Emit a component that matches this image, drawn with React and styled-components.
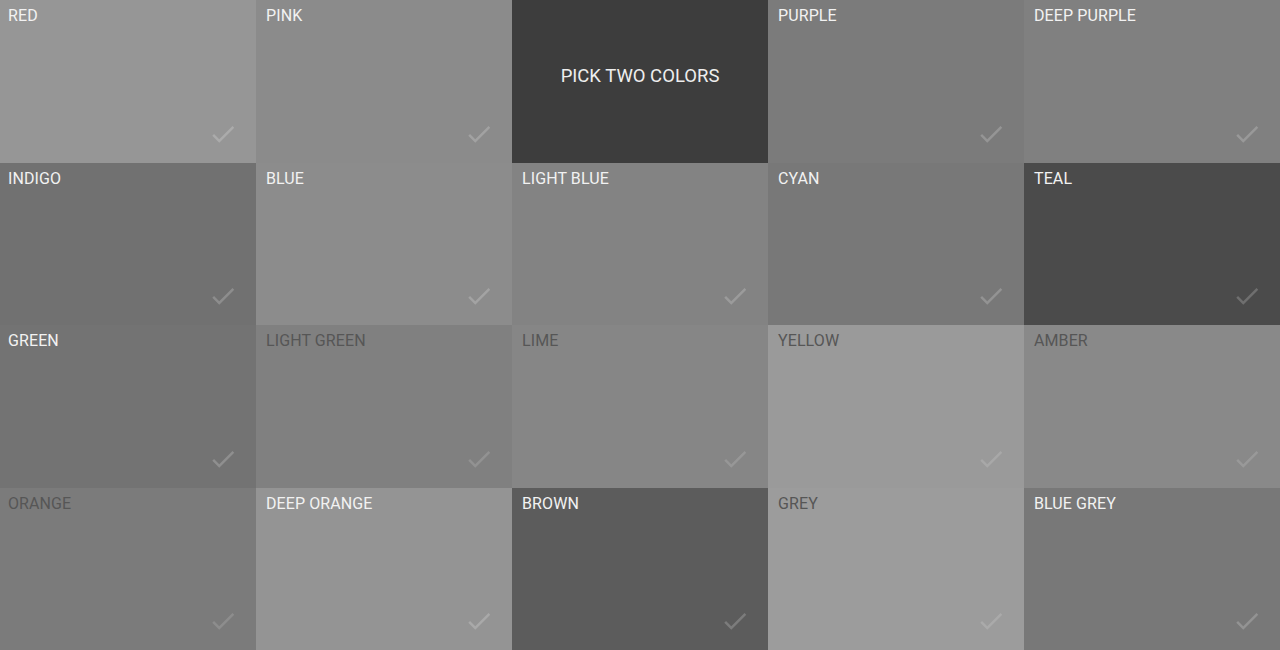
import styled, { createGlobalStyle } from 'styled-components';

const GlobalStyle = createGlobalStyle`
  html, body {
    margin: 0;
    padding: 0;
    height: 100%;
    overflow: hidden;
  }
  #root {
    height: 100%;
  }
`;

const Grid = styled.div`
  display: grid;
  grid-template-columns: repeat(5, 1fr);
  grid-template-rows: repeat(4, 1fr);
  width: 100vw;
  height: 100vh;
  font-family: Roboto, "Liberation Sans", sans-serif;
`;

const Tile = styled.div`
  position: relative;
  background: ${(p) => p.$bg};
  color: ${(p) => (p.$dark ? '#565656' : '#f2f2f2')};
  padding: 6px 10px;
  box-sizing: border-box;

  &:nth-child(5n + 1) {
    padding-left: 8px;
  }
`;

const Label = styled.div`
  font-size: 16px;
  line-height: 20px;
  letter-spacing: 0.1px;
`;

const Prompt = styled.div`
  display: flex;
  align-items: center;
  justify-content: center;
  background: #3d3d3d;
  color: #eeeeee;
  font-size: 18.5px;
  padding-bottom: 10px;
`;

const Check = styled.svg`
  position: absolute;
  right: 18px;
  bottom: 14px;
  width: 30px;
  height: 30px;
  fill: ${(p) => (p.$dark ? 'rgba(255,255,255,0.14)' : 'rgba(255,255,255,0.2)')};
`;

const colors = [
  { name: 'RED', bg: '#969696' },
  { name: 'PINK', bg: '#8b8b8b' },
  null,
  { name: 'PURPLE', bg: '#7b7b7b' },
  { name: 'DEEP PURPLE', bg: '#808080' },
  { name: 'INDIGO', bg: '#717171' },
  { name: 'BLUE', bg: '#8c8c8c' },
  { name: 'LIGHT BLUE', bg: '#838383' },
  { name: 'CYAN', bg: '#787878' },
  { name: 'TEAL', bg: '#4b4b4b' },
  { name: 'GREEN', bg: '#737373' },
  { name: 'LIGHT GREEN', bg: '#808080', dark: true },
  { name: 'LIME', bg: '#868686', dark: true },
  { name: 'YELLOW', bg: '#9a9a9a', dark: true },
  { name: 'AMBER', bg: '#898989', dark: true },
  { name: 'ORANGE', bg: '#7b7b7b', dark: true },
  { name: 'DEEP ORANGE', bg: '#949494' },
  { name: 'BROWN', bg: '#5c5c5c' },
  { name: 'GREY', bg: '#9c9c9c', dark: true },
  { name: 'BLUE GREY', bg: '#787878' },
];

function CheckIcon({ dark }) {
  return (
    <Check viewBox="0 0 24 24" $dark={dark}>
      <path d="M9 16.17L4.83 12l-1.42 1.41L9 19 21 7l-1.41-1.41z" />
    </Check>
  );
}

export default function App() {
  return (
    <>
      <GlobalStyle />
      <Grid>
        {colors.map((c, i) =>
          c ? (
            <Tile key={c.name} $bg={c.bg} $dark={c.dark}>
              <Label>{c.name}</Label>
              <CheckIcon dark={c.dark} />
            </Tile>
          ) : (
            <Prompt key={i}>PICK TWO COLORS</Prompt>
          )
        )}
      </Grid>
    </>
  );
}
